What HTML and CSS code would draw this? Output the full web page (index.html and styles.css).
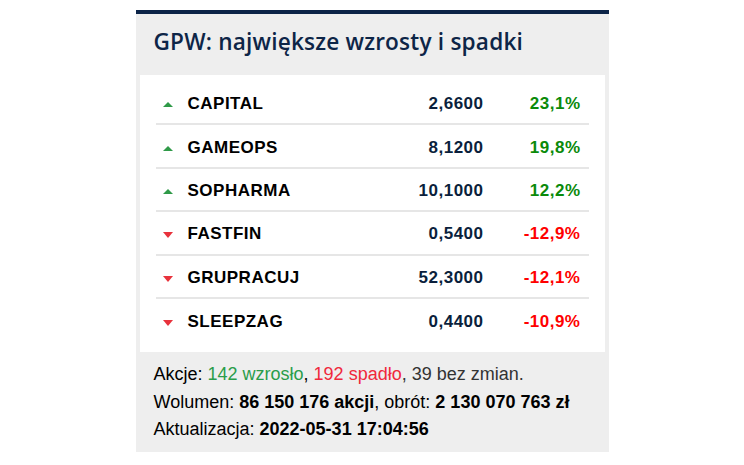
FILE: index.html
```html
<!DOCTYPE html>
<html lang="pl">
<head>
<meta charset="utf-8">
<title>GPW</title>
<link rel="stylesheet" href="styles.css">
</head>
<body>
<div class="widget">
  <h2 class="title">GPW: największe wzrosty i spadki</h2>
  <div class="box">
    <div class="row"><span class="arrow up"></span><span class="name">CAPITAL</span><span class="price">2,6600</span><span class="pct plus">23,1%</span></div>
    <div class="row"><span class="arrow up"></span><span class="name">GAMEOPS</span><span class="price">8,1200</span><span class="pct plus">19,8%</span></div>
    <div class="row"><span class="arrow up"></span><span class="name">SOPHARMA</span><span class="price">10,1000</span><span class="pct plus">12,2%</span></div>
    <div class="row"><span class="arrow down"></span><span class="name">FASTFIN</span><span class="price">0,5400</span><span class="pct minus">-12,9%</span></div>
    <div class="row"><span class="arrow down"></span><span class="name">GRUPRACUJ</span><span class="price">52,3000</span><span class="pct minus">-12,1%</span></div>
    <div class="row last"><span class="arrow down"></span><span class="name">SLEEPZAG</span><span class="price">0,4400</span><span class="pct minus">-10,9%</span></div>
  </div>
  <div class="summary">
    <p>Akcje: <span class="g">142 wzrosło</span>, <span class="r">192 spadło</span><span class="n">, 39 bez zmian.</span></p>
    <p>Wolumen: <b>86 150 176 akcji</b>, obrót: <b>2 130 070 763 zł</b></p>
    <p>Aktualizacja: <b>2022-05-31 17:04:56</b></p>
  </div>
</div>
</body>
</html>
```
FILE: styles.css
```css
html, body {
  margin: 0;
  padding: 0;
  background: #ffffff;
}
.widget {
  width: 465px;
  margin: 10px auto 0;
  border-top: 4px solid #0b2347;
  background: #eeeeee;
  padding: 0 4px;
}
.title {
  margin: 0;
  height: 61px;
  line-height: 55px;
  padding-left: 14px;
  font-family: "Open Sans", sans-serif;
  font-weight: 600;
  font-size: 22.6px;
  letter-spacing: 0.2px;
  color: #0d2547;
}
.box {
  background: #ffffff;
  padding: 7px 16px 10px;
}
.row {
  box-sizing: border-box;
  display: grid;
  grid-template-columns: 32px 1fr auto 105px;
  align-items: center;
  height: 43.4px;
  padding-top: 3px;
  border-bottom: 2px solid #e6e6e6;
  font-family: "Liberation Sans", Arial, sans-serif;
  font-weight: 700;
  font-size: 17px;
  letter-spacing: 0.5px;
}
.row.last {
  border-bottom: 0;
}
.arrow {
  width: 0;
  height: 0;
  margin-left: 7px;
  border-left: 5px solid transparent;
  border-right: 5px solid transparent;
}
.arrow.up {
  border-bottom: 5px solid #2f9a48;
  margin-top: 1px;
}
.arrow.down {
  border-top: 6px solid #e8323c;
  margin-top: 2px;
}
.name {
  color: #000000;
}
.price {
  color: #0a1f3c;
  text-align: right;
}
.pct {
  text-align: right;
  padding-right: 8px;
}
.pct.plus {
  color: #0a8a0a;
}
.pct.minus {
  color: #ff0000;
}
.summary {
  padding: 9px 14px 8px;
  font-family: "Liberation Sans", Arial, sans-serif;
  font-size: 18px;
  line-height: 27.5px;
  color: #000000;
}
.summary p {
  margin: 0;
}
.summary .g {
  color: #2a9d4a;
}
.summary .r {
  color: #f0283c;
}
.summary .n {
  color: #333333;
}
```
